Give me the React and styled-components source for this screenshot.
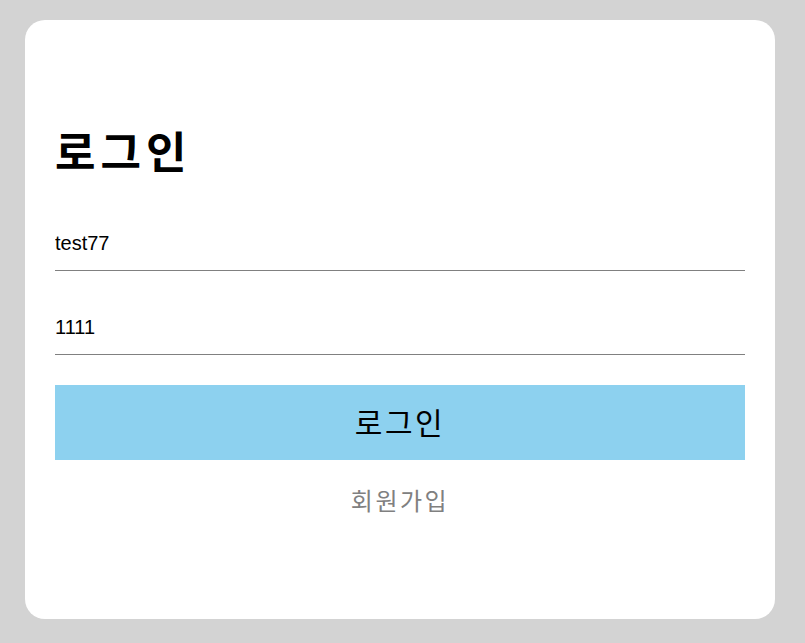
import React, { useState } from "react";
import styled, { createGlobalStyle } from "styled-components";

const GlobalStyle = createGlobalStyle`
    html, body {
        margin: 0;
        padding: 0;
        background: #d3d3d3;
    }
    body {
        font-family: "Liberation Sans", "Noto Sans CJK KR", Arial, sans-serif;
    }
`;

const Page = styled.div`
    min-height: 643px;
    box-sizing: border-box;
    padding: 20px 30px 24px 25px;
    display: flex;
    align-items: flex-start;
`;

const Card = styled.form`
    width: 750px;
    height: 599px;
    box-sizing: border-box;
    padding: 92px 30px 30px;
    background: #ffffff;
    border-radius: 20px;
    display: flex;
    flex-direction: column;
`;

const Title = styled.h1`
    margin: 0 0 35px;
    font-family: "Noto Sans CJK KR", sans-serif;
    font-size: 44px;
    font-weight: 700;
    letter-spacing: 5px;
    line-height: 76px;
    color: #000;
`;

const Field = styled.input`
    display: block;
    width: 100%;
    box-sizing: border-box;
    height: 48px;
    margin-bottom: 36px;
    padding: 0 0 6px;
    border: none;
    border-bottom: 1px solid #808080;
    outline: none;
    background: transparent;
    font-family: "Liberation Sans", Arial, sans-serif;
    font-size: 20px;
    color: #000;

    &:last-of-type {
        margin-bottom: 30px;
    }
`;

const SubmitButton = styled.button`
    width: 100%;
    height: 75px;
    padding: 0 0 3px;
    border: none;
    background: #8dd1ef;
    font-family: "Noto Sans CJK KR", sans-serif;
    font-size: 30px;
    letter-spacing: 2.5px;
    color: #000;
    cursor: pointer;
`;

const SignupLink = styled.a`
    align-self: center;
    margin-top: 22px;
    font-family: "Noto Sans CJK KR", sans-serif;
    font-size: 24px;
    letter-spacing: 2.5px;
    color: #808080;
    text-decoration: none;
    cursor: pointer;
`;

export default function App() {
    const [id, setId] = useState("test77");
    const [pw, setPw] = useState("1111");

    return (
        <>
            <GlobalStyle />
            <Page>
                <Card onSubmit={e => e.preventDefault()}>
                    <Title>로그인</Title>
                    <Field value={id} onChange={e => setId(e.target.value)} />
                    <Field value={pw} onChange={e => setPw(e.target.value)} />
                    <SubmitButton type="submit">로그인</SubmitButton>
                    <SignupLink>회원가입</SignupLink>
                </Card>
            </Page>
        </>
    );
}
